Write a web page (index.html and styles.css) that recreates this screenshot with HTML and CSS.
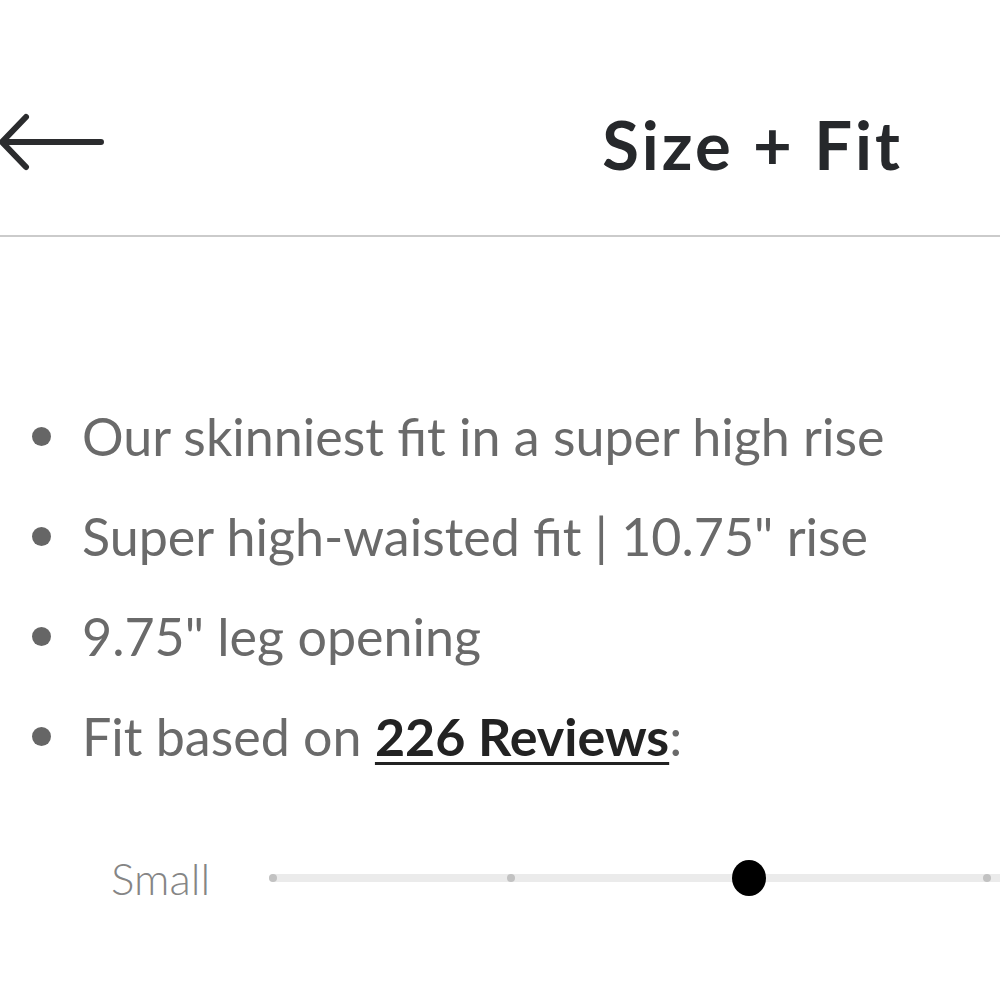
FILE: index.html
```html
<!doctype html>
<html lang="en">
<head>
  <meta charset="utf-8">
  <title>Size + Fit</title>
  <link rel="stylesheet" href="styles.css">
</head>
<body>
  <div class="topBar">
    <a class="backLink" href="#" aria-label="Back">
      <svg width="110" height="62" viewBox="0 0 110 62">
        <path d="M101 31 H3 M26 6 L2 31 L26 56" fill="none" stroke="#2b2c2e" stroke-width="6" stroke-linecap="round" stroke-linejoin="round"/>
      </svg>
    </a>
    <h1 class="title">Size + Fit</h1>
  </div>

  <ul class="fitList">
    <li>Our skinniest fit in a super high rise</li>
    <li>Super high-waisted fit | 10.75" rise</li>
    <li>9.75" leg opening</li>
    <li>Fit based on <a class="reviews" href="#">226 Reviews</a>:</li>
  </ul>

  <div class="fitScale">
    <span class="scaleLabel">Small</span>
    <div class="track">
      <span class="stop first"><i class="tick"></i></span>
      <span class="stop"><i class="tick"></i></span>
      <span class="stop"><i class="knob"></i></span>
      <span class="stop"><i class="tick"></i></span>
    </div>
  </div>
</body>
</html>
```

FILE: styles.css
```css
html, body {
  margin: 0;
  background: #fff;
  overflow: hidden;
}
body {
  font-family: "Lato", "Noto Sans", sans-serif;
  color: #6a6a6a;
}
.topBar {
  display: flex;
  align-items: flex-start;
  height: 237px;
  padding-top: 111px;
  box-sizing: border-box;
  border-bottom: 2px solid #cbcbcb;
}
.backLink {
  display: block;
  line-height: 0;
}
.title {
  margin: 0 97px 0 auto;
  font-size: 67px;
  line-height: 1;
  font-weight: 700;
  color: #26282b;
  letter-spacing: 3px;
}
.fitList {
  list-style: none;
  margin: 149px 0 0;
  padding: 0 0 0 32px;
}
.fitList li {
  display: flex;
  align-items: center;
  height: 100px;
  font-size: 52px;
  white-space: pre;
}
.fitList li::before {
  content: "";
  width: 19px;
  height: 19px;
  border-radius: 50%;
  background: #666;
  margin-right: 31px;
  flex: none;
}
.reviews {
  color: #222;
  font-weight: 700;
  text-decoration: underline;
  text-decoration-thickness: 3px;
  text-underline-offset: 6px;
}
.fitScale {
  display: flex;
  align-items: center;
  margin-top: 66px;
  padding-left: 111px;
}
.scaleLabel {
  width: 158px;
  flex: none;
  font-size: 44px;
  font-weight: 300;
  color: #858585;
}
/* the scale runs on past the right edge, so it is cut at the window */
.track {
  flex: none;
  width: 731px;
  height: 8px;
  border-radius: 4px 0 0 4px;
  background: #ebebeb;
  display: flex;
  align-items: center;
  gap: 204px;
}
.stop {
  width: 34px;
  height: 34px;
  display: flex;
  align-items: center;
  justify-content: center;
  flex: none;
}
.stop.first {
  margin-left: -13px;
}
.tick {
  width: 8px;
  height: 8px;
  border-radius: 50%;
  background: #c2c2c2;
}
.knob {
  width: 34px;
  height: 36px;
  border-radius: 50%;
  background: #000;
}
```
